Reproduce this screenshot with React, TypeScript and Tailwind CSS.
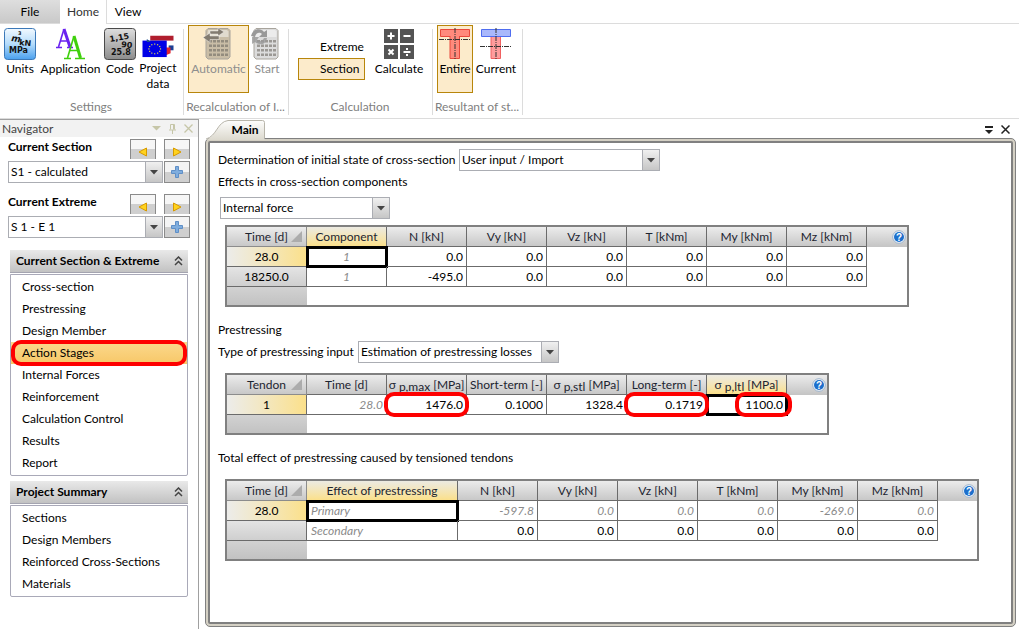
import { useState, type ReactNode } from "react";
import { clsx, type ClassValue } from "clsx";
import { twMerge } from "tailwind-merge";

// Utility for clean class merging
function cn(...inputs: ClassValue[]) {
  return twMerge(clsx(inputs));
}

const SECTION_LINKS = [
  "Cross-section",
  "Prestressing",
  "Design Member",
  "Action Stages",
  "Internal Forces",
  "Reinforcement",
  "Calculation Control",
  "Results",
  "Report",
];

const PROJECT_LINKS = [
  "Sections",
  "Design Members",
  "Reinforced Cross-Sections",
  "Materials",
];

const FORCE_HEADS = ["N [kN]", "Vy [kN]", "Vz [kN]", "T [kNm]", "My [kNm]", "Mz [kNm]"];

/* ---------- Icons ---------- */

function UnitsIcon() {
  return (
    <svg width="32" height="32" viewBox="0 0 32 32">
      <defs>
        <linearGradient id="units" x1="0" y1="0" x2="0" y2="1">
          <stop offset="0" stopColor="#f2f9ff" />
          <stop offset="0.5" stopColor="#b5dcfb" />
          <stop offset="1" stopColor="#4aa0ee" />
        </linearGradient>
      </defs>
      <rect x="0.5" y="0.5" width="31" height="31" rx="3" fill="url(#units)" stroke="#3b78b8" />
      <g fontFamily="DejaVu Sans" fontWeight="bold" fill="#111">
        <text x="7" y="13" fontSize="9" fontStyle="italic" transform="rotate(8 7 13)">m</text>
        <text x="14" y="7" fontSize="5">3</text>
        <text x="15" y="17" fontSize="8" transform="rotate(6 15 17)">kN</text>
        <text x="5" y="25" fontSize="8">MPa</text>
      </g>
    </svg>
  );
}

function ApplicationIcon() {
  return (
    <svg width="32" height="32" viewBox="0 0 32 32">
      <g fill="none" stroke="#6a22f0">
        <path d="M1 19.500h6M12 19.500h6M5 13h8" strokeWidth="1.400" />
        <path d="M3.500 19L9 1" strokeWidth="1.600" />
        <path d="M9 1l6 18" strokeWidth="3" />
      </g>
      <g fill="none" stroke="#3fd00c">
        <path d="M9 30.500h7M20 30.500h10M14 22.500h9" strokeWidth="1.400" />
        <path d="M12.500 30L19 8" strokeWidth="1.600" />
        <path d="M19 8l6.500 22" strokeWidth="3" />
      </g>
    </svg>
  );
}

function CodeIcon() {
  return (
    <svg width="32" height="32" viewBox="0 0 32 32">
      <defs>
        <linearGradient id="code" x1="0" y1="0" x2="0" y2="1">
          <stop offset="0" stopColor="#dedede" />
          <stop offset="1" stopColor="#8c8c8c" />
        </linearGradient>
      </defs>
      <rect x="0.5" y="0.5" width="31" height="31" rx="3" fill="url(#code)" stroke="#4a4a4a" />
      <g fontFamily="DejaVu Sans" fontWeight="bold" fill="#111" fontSize="8">
        <text x="6" y="14" transform="rotate(-10 6 14)">1,15</text>
        <text x="17" y="19" transform="rotate(6 17 19)">90</text>
        <text x="7" y="27">25.8</text>
      </g>
    </svg>
  );
}

const EU_STARS = Array.from({ length: 12 }, (_, i) => {
  const a = (i * Math.PI) / 6;
  return { x: 12.5 + 6 * Math.cos(a), y: 21 + 5 * Math.sin(a) };
});

function ProjectIcon() {
  return (
    <svg width="32" height="32" viewBox="0 0 32 32">
      <rect x="8" y="8" width="24" height="5" fill="#b01e2e" />
      <rect x="27" y="18" width="5" height="5" fill="#1c3f94" />
      <path d="M24 20h5v6l-5 2z" fill="#e0242e" />
      <path d="M4.500 11.500L10 16H4.500z" fill="#1f4f8c" />
      <rect x="0" y="13" width="25" height="17" fill="#0000e6" />
      <path d="M4.500 11.500l4 3h-4z" fill="#1f4f8c" />
      {EU_STARS.map((s, i) => (
        <rect key={i} x={s.x - 0.5} y={s.y} width="1.200" height="1.200" fill="#e8e04a" />
      ))}
    </svg>
  );
}

function CalculatorIcon({ tint, restart }: { tint: string; restart?: boolean }) {
  return (
    <svg width="32" height="32" viewBox="0 0 32 32">
      <path d="M5 .5h20l2 2V29l-2 2H5l-2-2V2.500z" fill={tint} stroke="#a8a49c" />
      <path d="M5 2h19l1.500 1.500V9H4z" fill="#fff" opacity="0.45" />
      {[13, 17.5, 22, 26.5].map((y) =>
        [6, 10, 14, 18, 22].map((x) => (
          <rect key={x + "-" + y} x={x} y={y - 1} width="3" height="2.500" fill="#6f6a64" opacity="0.6" />
        ))
      )}
      {restart ? (
        <g fill="#999">
          <path d="M0 8C2 0 10 0 13 4l3-2v7H8l3-3C9 4 5 4 4 9z" />
          <path d="M16 10c-1 8-9 7-12 4l-3 2V9h7l-2 3c2 2 6 1 7-2z" opacity="0.8" />
        </g>
      ) : (
        <g fill="#827b70" stroke="#fff" strokeWidth="0.400">
          <path d="M7 3h8V0l6 4L15 8V6H7z" />
          <path d="M16 8H7V5L0 9.500l7 5v-3h9z" />
        </g>
      )}
    </svg>
  );
}

function CalculateIcon() {
  return (
    <svg width="32" height="32" viewBox="0 0 32 32">
      <path d="M1 1h14v14H1zM17 1h14v14H17zM1 17h14v14H1zM17 17h14v14H17z" fill="#545454" />
      <path d="M4.500 8h7M8 4.500v7M20.500 8h7M5.500 21.500l5 5M10.500 21.500l-5 5M20.500 24h7" stroke="#fff" strokeWidth="2" />
      <path d="M23 20h2v2h-2zM23 26h2v2h-2z" fill="#fff" />
    </svg>
  );
}

function BeamIcon({ current }: { current?: boolean }) {
  const axis = current ? 18.5 : 11.5;
  return (
    <svg width="32" height="32" viewBox="0 0 32 32">
      <path d="M11 8.500h9.500v22H11z" fill={current ? "#ff9c9c" : "#ff8a7c"} stroke={current ? "#f06060" : "#e84a3c"} />
      <path
        d="M1.500 1.500h29v7h-29z"
        fill={current ? "#a9b8fb" : "#ff8a7c"}
        stroke={current ? "#4f6df0" : "#e84a3c"}
      />
      {!current && <path d="M11.500 8h8.500v1.500h-8.500z" fill="#ff8a7c" />}
      <path d={`M16 0v32M0 ${axis}h32`} stroke="#333" strokeDasharray="5 1 1 1" />
    </svg>
  );
}

function HelpIcon() {
  return (
    <svg width="14" height="14" viewBox="0 0 14 14">
      <circle cx="7" cy="7" r="6.300" fill="#f4f7fb" stroke="#9cb3cc" />
      <circle cx="7" cy="7" r="5" fill="#1c6fcc" />
      <text x="7" y="10.500" fontSize="10" fontWeight="bold" textAnchor="middle" fill="#fff" fontFamily="Liberation Sans">?</text>
    </svg>
  );
}

/* ---------- Controls ---------- */

function Dropdown({ id, label, options, className }: { id: string; label?: string; options: string[]; className?: string }) {
  return (
    <div className={cn("relative h-[22px]", className)}>
      <select
        id={id}
        aria-label={label}
        className="h-full w-full appearance-none border border-[#abadb3] bg-white pr-[18px] pl-[2px] text-black outline-none"
      >
        {options.map((o) => (
          <option key={o}>{o}</option>
        ))}
      </select>
      <span className="pointer-events-none absolute inset-y-0 right-0 flex w-[18px] items-center justify-center border border-[#abadb3] bg-linear-to-b from-[#f0f0f0] to-[#c6c6c6]">
        <svg width="8" height="5" viewBox="0 0 8 5">
          <path d="M0 0h8L4 4.500z" fill="#444" />
        </svg>
      </span>
    </div>
  );
}

function RibbonButton({ icon, label, active, disabled, className }: { icon: ReactNode; label: string; active?: boolean; disabled?: boolean; className?: string }) {
  return (
    <button
      type="button"
      disabled={disabled}
      className={cn(
        "flex h-[68px] flex-col items-center border border-transparent pt-[2px] leading-4",
        active && "border-[#b8860b] bg-[#fcebcb]",
        disabled && "text-[#8e8e8e]",
        className
      )}
    >
      {icon}
      <span className="mt-px whitespace-pre-line">{label}</span>
    </button>
  );
}

function RibbonGroup({ title, children, className }: { title: string; children: ReactNode; className?: string }) {
  return (
    <section className={cn("relative flex flex-col justify-between", className)}>
      <div className="flex">{children}</div>
      <h2 className="pr-[2px] text-center leading-4 whitespace-nowrap text-[#808080]">{title}</h2>
      <span className="absolute top-1 right-0 h-[86px] w-px bg-[#dcdcdc]" />
    </section>
  );
}

function StepButton({ back, label }: { back?: boolean; label: string }) {
  return (
    <button
      type="button"
      aria-label={label}
      className="flex h-5 w-[26px] items-center justify-center border border-b-0 border-[#8a8a8a] bg-linear-to-b from-[#f6f6f6] from-50% to-[#cfcfcf] to-50% pt-1"
    >
      <svg width="10" height="10" viewBox="0 0 10 10">
        <path d={back ? "M8.500 1v8L1 5z" : "M1.500 1v8L9 5z"} fill="#ffd21e" stroke="#d79a00" />
      </svg>
    </button>
  );
}

function Picker({ title, id, value }: { title: string; id: string; value: string }) {
  return (
    <div className="pr-2 pl-2">
      <div className="flex h-[22px] gap-2">
        <label htmlFor={id} className="flex-1 leading-4 font-bold">{title}</label>
        <StepButton back label={"Previous, " + title} />
        <StepButton label={"Next, " + title} />
      </div>
      <div className="flex gap-px">
        <Dropdown id={id} options={[value]} className="flex-1" />
        <button
          type="button"
          aria-label={"Add to " + title}
          className="flex h-[22px] w-[26px] items-center justify-center border border-[#8a8a8a] bg-linear-to-b from-[#f4f4f4] from-50% to-[#cfcfcf] to-50%"
        >
          <svg width="12" height="12" viewBox="0 0 12 12">
            <path d="M4.500.5h3v4h4v3h-4v4h-3v-4h-4v-3h4z" fill="#7fadde" stroke="#5f8fc6" />
          </svg>
        </button>
      </div>
    </div>
  );
}

function NavSection({ title, links, active }: { title: string; links: string[]; active?: string }) {
  return (
    <section className="px-[10px]">
      <button
        type="button"
        className="flex h-[23px] w-full items-center justify-between border-b border-[#a4a4b0] bg-linear-to-b from-[#e9e9e9] to-[#c2c2c2] pr-[5px] pl-[6px] font-bold whitespace-nowrap"
      >
        {title}
        <svg width="9" height="10" viewBox="0 0 9 10" fill="none" stroke="#444" strokeWidth="1.500">
          <path d="M1 4.500L4.500 1 8 4.500M1 9l3.500-3.500L8 9" />
        </svg>
      </button>
      <ul className="mt-px rounded-b-xs border border-[#a9a9b8] py-px">
        {links.map((l) => (
          <li key={l} className="relative">
            <a
              href="#"
              className={cn(
                "flex h-[22px] items-center pl-[11px]",
                l === active && "bg-linear-to-b from-[#fbd98c] to-[#f7c767]"
              )}
            >
              {l}
            </a>
            {l === active && <Mark className="inset-x-0 -inset-y-[2px]" />}
          </li>
        ))}
      </ul>
    </section>
  );
}

// Red highlight drawn over a value
function Mark({ className }: { className: string }) {
  return <span className={cn("pointer-events-none absolute z-10 rounded-[10px] border-4 border-[#fe0000]", className)} />;
}

/* ---------- Data grids ---------- */

type Cell = { v: string; muted?: boolean; left?: boolean; center?: boolean; focus?: boolean; mark?: string };
type Row = { head: string; current?: boolean; cells: Cell[] };

function DataGrid({ corner, heads, rows, activeCol, wide, className }: { corner: string; heads: ReactNode[]; rows: Row[]; activeCol: number; wide?: boolean; className?: string }) {
  return (
    <div className={cn("ml-[15px] border-2 border-[#808080]", className)}>
      <table className="w-full table-fixed border-separate border-spacing-0 leading-4">
        <colgroup>
          <col className="w-20" />
          {heads.map((_, i) => (
            <col key={i} className={wide && i === 0 ? "w-[151px]" : "w-20"} />
          ))}
          <col />
        </colgroup>
        <thead>
          <tr className="h-5 text-[#1c2430]">
            <th className="relative border-r border-b border-[#8c8c8c] bg-linear-to-b from-[#ececec] to-[#c8c8c8] p-0 font-normal">
              {corner}
              <svg className="absolute right-1 bottom-1" width="11" height="11" viewBox="0 0 11 11">
                <path d="M11 0v11H0z" fill="#acacac" />
              </svg>
            </th>
            {heads.map((h, i) => (
              <th
                key={i}
                className={cn(
                  "overflow-hidden border-r border-b border-[#6b6b6b] bg-linear-to-b from-[#ececec] to-[#c8c8c8] p-0 font-normal whitespace-nowrap",
                  i === activeCol && "from-[#eceae2] to-[#fbe08a]"
                )}
              >
                {h}
              </th>
            ))}
            <td className="bg-linear-to-b from-[#ececec] to-[#c4c4c4] p-0">
              <button type="button" aria-label="Help" className="mr-px ml-auto block">
                <HelpIcon />
              </button>
            </td>
          </tr>
        </thead>
        <tbody>
          {rows.map((r, ri) => (
            <tr key={ri} className="h-5">
              <th
                scope="row"
                className={cn(
                  "border-r border-b border-[#6b6b6b] bg-linear-to-b from-[#e4e4e4] to-[#cfcfcf] p-0 font-normal",
                  r.current && "bg-linear-to-r from-[#ececea] to-[#fbe08a]"
                )}
              >
                {r.head}
              </th>
              {r.cells.map((c, i) => (
                <td
                  key={i}
                  className={cn(
                    "relative border-r border-b border-[#6b6b6b] p-0 pr-[3px] text-right",
                    c.muted && "text-[#8a8a8a] italic",
                    c.left && "pl-1 text-left",
                    c.center && "pr-0 text-center"
                  )}
                >
                  {c.v}
                  {c.focus && <span className="absolute -top-px -right-[2px] -bottom-[2px] -left-px border-[3px] border-black" />}
                  {c.mark && <Mark className={c.mark} />}
                </td>
              ))}
              <td />
            </tr>
          ))}
          <tr className="h-[18px]">
            <td className="bg-linear-to-b from-[#d2d2d2] to-[#c2c2c2]" />
            <td colSpan={heads.length + 1} />
          </tr>
        </tbody>
      </table>
    </div>
  );
}

function Sigma({ sub }: { sub: string }) {
  return (
    <>
      σ <span className="relative top-[2px]">{sub}</span> [MPa]
    </>
  );
}

const nums = (list: string[], muted?: boolean): Cell[] => list.map((v) => ({ v, muted }));

const EFFECT_ROWS: Row[] = [
  {
    head: "28.0",
    current: true,
    cells: [{ v: "1", muted: true, center: true, focus: true }, ...nums(["0.0", "0.0", "0.0", "0.0", "0.0", "0.0"])],
  },
  {
    head: "18250.0",
    cells: [{ v: "1", muted: true, center: true }, ...nums(["-495.0", "0.0", "0.0", "0.0", "0.0", "0.0"])],
  },
];

const TENDON_ROWS: Row[] = [
  {
    head: "1",
    current: true,
    cells: [
      { v: "28.0", muted: true },
      { v: "1476.0", mark: "-inset-x-[3px] -inset-y-[3px]" },
      { v: "0.1000" },
      { v: "1328.4" },
      { v: "0.1719", mark: "-inset-x-[3px] -inset-y-[3px]" },
      { v: "1100.0", focus: true, mark: "left-7 -right-[6px] -inset-y-[3px]" },
    ],
  },
];

const TOTAL_ROWS: Row[] = [
  {
    head: "28.0",
    current: true,
    cells: [
      { v: "Primary", muted: true, left: true, focus: true },
      ...nums(["-597.8", "0.0", "0.0", "0.0", "-269.0", "0.0"], true),
    ],
  },
  {
    head: "",
    cells: [{ v: "Secondary", muted: true, left: true }, ...nums(["0.0", "0.0", "0.0", "0.0", "0.0", "0.0"])],
  },
];

/* ---------- Page ---------- */

export default function App() {
  const [mode, setMode] = useState("Section");

  return (
    <div className="flex min-h-screen flex-col bg-white font-['Lato',sans-serif] text-[12px] leading-4 text-black">
      {/* Menu tabs */}
      <nav className="flex h-6 border-b border-[#dcdcdc]">
        <button type="button" className="w-[60px] bg-linear-to-b from-[#dedede] to-[#c9c9c9]">File</button>
        <button type="button" className="-mb-px w-[47px] border-r border-[#dcdcdc] bg-white text-[#333]">Home</button>
        <button type="button" className="w-[42px]">View</button>
      </nav>

      {/* Ribbon */}
      <header className="flex h-[95px] border-b border-[#dcdcdc] pt-px pb-[3px]">
        <RibbonGroup title="Settings" className="w-[184px]">
          <RibbonButton icon={<UnitsIcon />} label="Units" className="w-10" />
          <RibbonButton icon={<ApplicationIcon />} label="Application" className="w-[61px]" />
          <RibbonButton icon={<CodeIcon />} label="Code" className="w-[38px]" />
          <RibbonButton icon={<ProjectIcon />} label={"Project\ndata"} className="w-[38px]" />
        </RibbonGroup>
        <RibbonGroup title="Recalculation of I..." className="w-[105px]">
          <div className="flex pl-1">
            <RibbonButton icon={<CalculatorIcon tint="#c9bda6" />} label="Automatic" active disabled className="w-[61px]" />
            <RibbonButton icon={<CalculatorIcon tint="#dcdcdc" restart />} label="Start" disabled className="w-9" />
          </div>
        </RibbonGroup>
        <RibbonGroup title="Calculation" className="w-36">
          <div className="ml-[9px] flex w-[67px] flex-col pt-[11px]">
            {["Extreme", "Section"].map((m) => (
              <button
                key={m}
                type="button"
                onClick={() => setMode(m)}
                className={cn(
                  "h-[22px] border border-transparent pl-[21px] text-left",
                  m === mode && "border-[#b8860b] bg-[#fcebcb]"
                )}
              >
                {m}
              </button>
            ))}
          </div>
          <RibbonButton icon={<CalculateIcon />} label="Calculate" className="ml-[6px] w-14" />
        </RibbonGroup>
        <RibbonGroup title="Resultant of st..." className="w-[90px]">
          <div className="flex pl-1">
            <RibbonButton icon={<BeamIcon />} label="Entire" active className="w-9" />
            <RibbonButton icon={<BeamIcon current />} label="Current" className="w-[46px]" />
          </div>
        </RibbonGroup>
      </header>

      <div className="flex flex-1">
        {/* Navigator */}
        <aside className="w-[199px] shrink-0 border-r border-[#a0a0a0] pb-4">
          <div className="flex h-[18px] items-center gap-2 border-t border-[#a0a0a0] bg-[#f2f2f2] pr-[5px] pl-[2px] text-[#444]">
            <h2 className="flex-1">Navigator</h2>
            <svg width="9" height="5" viewBox="0 0 9 5"><path d="M0 0h9L4.500 4.500z" fill="#c6c6a8" /></svg>
            <svg width="7" height="10" viewBox="0 0 7 10" fill="none" stroke="#c6c6a8">
              <path d="M1.500.5h4v5M1.500.5v5M4.500.5v5M0 6h7M3.500 6v4" />
            </svg>
            <svg width="9" height="9" viewBox="0 0 9 9" stroke="#c6c6a8" strokeWidth="1.300"><path d="M.5.5l8 8M8.500.5l-8 8" /></svg>
          </div>
          <div className="mt-[2px] flex flex-col gap-[11px]">
            <Picker title="Current Section" id="section" value="S1 - calculated" />
            <Picker title="Current Extreme" id="extreme" value="S 1 - E 1" />
          </div>
          <div className="mt-3 flex flex-col gap-[5px]">
            <NavSection title="Current Section & Extreme" links={SECTION_LINKS} active="Action Stages" />
            <NavSection title="Project Summary" links={PROJECT_LINKS} />
          </div>
        </aside>

        {/* Document area */}
        <main className="flex min-w-0 flex-1 flex-col pr-[3px] pb-[2px] pl-[6px]">
          <div className="flex h-[19px] items-end">
            <button type="button" className="relative z-10 -mb-[2px] h-5 w-[60px] pl-5 font-bold">
              <svg className="absolute top-0 left-0 -z-10" width="60" height="20" viewBox="0 0 60 20">
                <defs>
                  <linearGradient id="tab" x1="0" y1="0" x2="0" y2="1">
                    <stop offset="0" stopColor="#fdfdfc" />
                    <stop offset="1" stopColor="#dcd9ce" />
                  </linearGradient>
                </defs>
                <path d="M1 20C12 16 12 2 23 .5h34.500q2 0 2 2V20z" fill="url(#tab)" />
                <path d="M1 19C12 16 12 2 23 .5h34.500q2 0 2 2V18" fill="none" stroke="#b8b5aa" />
              </svg>
              Main
            </button>
            <div className="mb-1 ml-auto flex items-center gap-2 pr-[6px]">
              <button type="button" aria-label="Window list">
                <svg className="block" width="8" height="8" viewBox="0 0 8 8"><path d="M0 0h8v2H0zM0 4h8L4 8z" fill="#222" /></svg>
              </button>
              <button type="button" aria-label="Close">
                <svg className="block" width="9" height="9" viewBox="0 0 9 9" stroke="#222" strokeWidth="1.500"><path d="M.5.5l8 8M8.500.5l-8 8" /></svg>
              </button>
            </div>
          </div>
          <div className="flex flex-1 rounded-[5px] border border-[#808080] bg-[#d4d0c4] p-[2px]">
            <div className="flex-1 rounded-xs border-2 border-[#808080] bg-white pt-[6px] pb-4">
              <div className="flex items-center pl-2">
                <label htmlFor="initial" className="min-w-[241px] whitespace-nowrap">Determination of initial state of cross-section</label>
                <Dropdown id="initial" options={["User input / Import"]} className="w-[201px]" />
              </div>
              <p className="mt-[3px] pl-2">Effects in cross-section components</p>
              <div className="mt-[7px] pl-[10px]">
                <Dropdown id="effects" label="Effects in cross-section components" options={["Internal force"]} className="w-[170px]" />
              </div>
              <DataGrid
                className="mt-[6px] w-[684px]"
                corner="Time [d]"
                heads={["Component", ...FORCE_HEADS]}
                rows={EFFECT_ROWS}
                activeCol={0}
              />
              <h3 className="mt-[15px] pl-2">Prestressing</h3>
              <div className="mt-[3px] flex items-center pl-2">
                <label htmlFor="input-type" className="min-w-[140px] whitespace-nowrap">Type of prestressing input</label>
                <Dropdown id="input-type" options={["Estimation of prestressing losses"]} className="w-[201px]" />
              </div>
              <DataGrid
                className="mt-[10px] w-[604px]"
                corner="Tendon"
                heads={["Time [d]", <Sigma sub="p,max" />, "Short-term [-]", <Sigma sub="p,stl" />, "Long-term [-]", <Sigma sub="p,ltl" />]}
                rows={TENDON_ROWS}
                activeCol={5}
              />
              <h3 className="mt-[15px] pl-2">Total effect of prestressing caused by tensioned tendons</h3>
              <DataGrid
                className="mt-[13px] w-[754px]"
                corner="Time [d]"
                heads={["Effect of prestressing", ...FORCE_HEADS]}
                rows={TOTAL_ROWS}
                activeCol={0}
                wide
              />
            </div>
          </div>
        </main>
      </div>
    </div>
  );
}
